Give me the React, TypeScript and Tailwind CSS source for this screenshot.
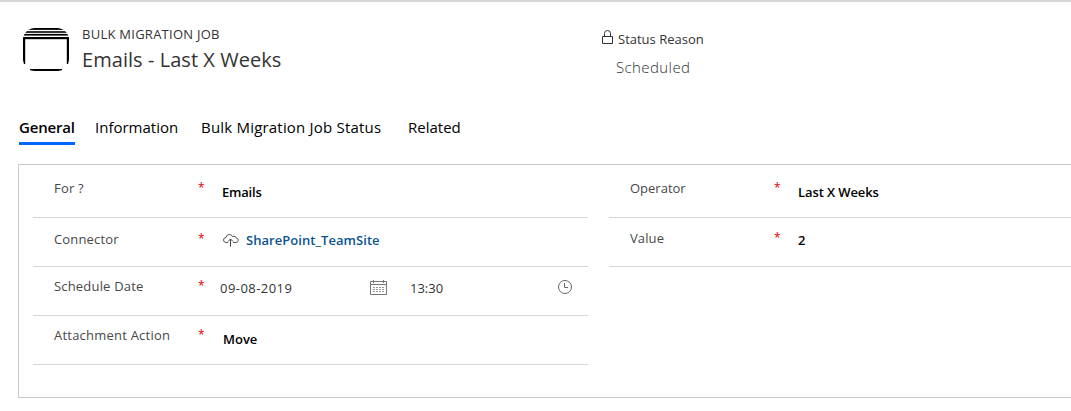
import type { ReactNode } from "react";

function JobIcon() {
  return (
    <svg width="48" height="44" viewBox="0 0 48 44" className="shrink-0" fill="#000">
      <clipPath id="job-outline">
        <rect x="1" y="0" width="46" height="43" rx="12" />
      </clipPath>
      <g clipPath="url(#job-outline)">
        <rect x="0" y="0" width="48" height="1.900" />
        <rect x="0" y="3.200" width="48" height="1.600" />
        <rect x="0" y="5.900" width="48" height="1.700" />
        <rect x="0" y="9" width="48" height="2.200" />
        <rect x="1" y="9" width="2.200" height="27" />
        <rect x="44.800" y="9" width="2.200" height="27" />
        <rect x="8" y="41" width="32" height="2" />
      </g>
    </svg>
  );
}

function LockIcon() {
  return (
    <svg width="13" height="15" viewBox="0 0 13 15" className="shrink-0" fill="none" stroke="#333">
      <path d="M1.500 7.500H11.500V14.500H1.500ZM3.500 7.500V4.500Q3.500 1.500 6.500 1.500T9.500 4.500V7.500" />
    </svg>
  );
}

function CloudIcon() {
  return (
    <svg width="18" height="14" viewBox="0 0 18 14" className="shrink-0" fill="none" stroke="#444">
      <path d="M6 9.500H4Q1.500 9.300 1.500 7T4 4.500Q4.500 1.500 7.200 1.500T10.500 3.500Q14 2.500 14.200 5Q16.500 5.500 16.300 7.400T14 9.500H11" strokeWidth="0.9" />
      <path d="M8.500 13.500V6M6 8.500L8.500 6L11 8.500" />
    </svg>
  );
}

function CalendarIcon() {
  return (
    <svg width="17" height="16" viewBox="0 0 17 16" className="shrink-0" fill="none" stroke="#777">
      <path d="M0.500 1.500H16.500V14.500H0.500ZM0.500 4.500H16.500M3.500 0V3M13.500 0V3" />
      <path d="M3 7.500H14M3 9.500H14M3 11.500H14" strokeDasharray="2 1" stroke="#999" />
    </svg>
  );
}

function ClockIcon() {
  return (
    <svg width="15" height="15" viewBox="0 0 15 15" className="shrink-0" fill="none" stroke="#666">
      <circle cx="7" cy="7" r="6.500" />
      <path d="M6.500 3V7.500H10" />
    </svg>
  );
}

function Field({ label, row, labelPad, valuePad, tracking = "", children }: {
  label: string;
  row: string;
  labelPad: string;
  valuePad: string;
  tracking?: string;
  children: ReactNode;
}) {
  return (
    <div className={`flex border-b border-[#d6d6d6] pl-[21px] text-[13px] leading-5 whitespace-nowrap ${row}`}>
      <div className={`flex w-[168px] shrink-0 text-[#484848] ${labelPad}`}>
        <span className={`w-[144px] ${tracking}`}>{label}</span>
        <span className="text-[12px] text-[#e00000]">*</span>
      </div>
      <div className={`flex flex-1 ${valuePad}`}>{children}</div>
    </div>
  );
}

export default function App() {
  return (
    <div className="h-[411px] w-full overflow-hidden border-t-2 border-[#d6d6d6] bg-white font-['Open_Sans',sans-serif] text-[#333]">
      <header className="flex h-[111px] pl-[22px] whitespace-nowrap">
        <div className="pt-[26px]"><JobIcon /></div>
        <div className="w-[531px] pt-[22px] pl-3">
          <div className="text-[13px] leading-5 tracking-[0.26px]">BULK MIGRATION JOB</div>
          <h1 className="pt-px text-[20px] leading-[30px] tracking-[0.05px]">Emails - Last X Weeks</h1>
        </div>
        <div className="pt-[27px]">
          <div className="flex gap-1">
            <LockIcon />
            <span className="text-[13px] leading-5">Status Reason</span>
          </div>
          <div className="pt-[6px] pl-[15px] text-[15px] leading-6 font-light tracking-[0.4px] text-[#333]">Scheduled</div>
        </div>
      </header>

      <nav className="flex h-[51px] pl-[19px] text-[15px] leading-[28px] whitespace-nowrap text-black">
        <div className="mr-5 h-8 w-14 border-b-3 border-[#0066ff] font-semibold tracking-[-0.2px]">General</div>
        <div className="w-[106px]">Information</div>
        <div className="w-[207px] tracking-[0.2px]">Bulk Migration Job Status</div>
        <div>Related</div>
      </nav>

      <main className="ml-[18px] flex h-[234px] border-y border-l border-[#c8c8c8] pl-[14px]">
        <section className="w-[555px]">
          <Field label="For ?" row="h-[53px]" labelPad="pt-[13px]" valuePad="pt-[17px]" tracking="tracking-[0.2px]">
            <span className="font-semibold tracking-[-0.2px] text-black">Emails</span>
          </Field>
          <Field label="Connector" row="h-[49px]" labelPad="pt-[11px]" valuePad="pt-[12px]" tracking="tracking-[0.15px]">
            <div className="flex gap-[6px]">
              <div className="pt-[3px]"><CloudIcon /></div>
              <span className="font-semibold tracking-[0.05px] text-[#0b5491]">SharePoint_TeamSite</span>
            </div>
          </Field>
          <Field label="Schedule Date" row="h-[49px]" labelPad="pt-[9px]" valuePad="pt-[11px]" tracking="tracking-[0.18px]">
            <span className="-ml-0.5 w-[150px] tracking-[0.45px]">09-08-2019</span>
            <div className="w-10 pt-[2px]"><CalendarIcon /></div>
            <span className="w-[148px]">13:30</span>
            <div className="pt-[2px]"><ClockIcon /></div>
          </Field>
          <Field label="Attachment Action" row="h-[49px]" labelPad="pt-[9px]" valuePad="pt-[13px]" tracking="tracking-[0.22px]">
            <span className="pl-px font-semibold text-black">Move</span>
          </Field>
        </section>
        <section className="ml-[21px] flex-1">
          <Field label="Operator" row="h-[53px]" labelPad="pt-[13px]" valuePad="pt-[17px]">
            <span className="font-semibold tracking-[-0.1px] text-black">Last X Weeks</span>
          </Field>
          <Field label="Value" row="h-[49px]" labelPad="pt-[10px]" valuePad="pt-[12px]" tracking="tracking-[0.1px]">
            <span className="font-semibold text-black">2</span>
          </Field>
        </section>
      </main>
    </div>
  );
}
